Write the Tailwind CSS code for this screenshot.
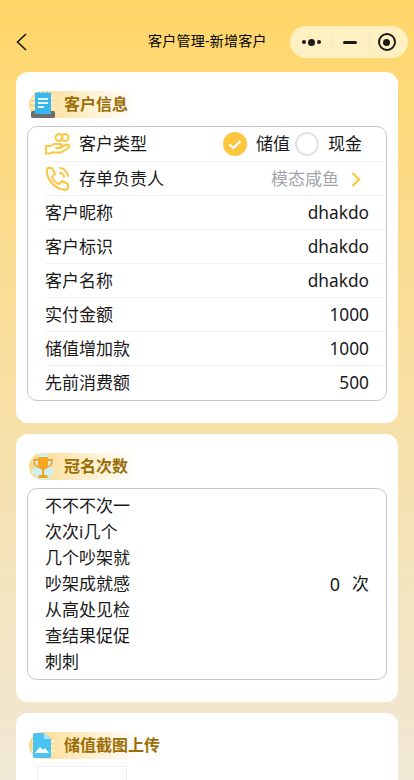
<!DOCTYPE html>
<html lang="zh">
<head>
<meta charset="utf-8">
<script src="https://cdn.jsdelivr.net/npm/@tailwindcss/browser@4"></script>
</head>
<body class="m-0">
<div class="w-[414px] h-[780px] overflow-hidden bg-gradient-to-b from-[#ffd667] to-[#f0e8d6] font-['Noto_Sans','Noto_Sans_CJK_SC',sans-serif] text-[#1a1a1a]">
  <header class="relative h-[72px] pt-[26px] pr-[6px] flex justify-end">
    <svg class="absolute left-[15px] top-[33px]" width="13" height="18" viewBox="0 0 13 18" fill="none" stroke="#111" stroke-width="1.5"><path d="M11 1 L2.5 9 L11 17"/></svg>
    <div class="absolute left-[148px] top-[32px] text-[14px] tracking-[0.25px] leading-[18px] text-black whitespace-nowrap">客户管理-新增客户</div>
    <div class="w-[118px] h-[32px] rounded-full bg-[#fff0c2] flex items-center">
      <div class="w-[41px] flex justify-center items-center gap-[2px] pl-[2px]">
        <span class="w-[4px] h-[4px] rounded-full bg-[#1a1a1a]"></span><span class="w-[7px] h-[7px] rounded-full bg-[#1a1a1a]"></span><span class="w-[4px] h-[4px] rounded-full bg-[#1a1a1a]"></span>
      </div>
      <div class="w-px h-[18px] bg-[#f5e6b8]"></div>
      <div class="w-[37px] flex justify-center pr-[2px]"><span class="w-[14px] h-[3px] rounded-sm bg-[#1a1a1a]"></span></div>
      <div class="w-px h-[18px] bg-[#f5e6b8]"></div>
      <div class="flex-1 flex justify-center pr-[5px]">
        <span class="w-[18px] h-[18px] rounded-full border-2 border-[#1a1a1a] flex items-center justify-center"><span class="w-[7px] h-[7px] rounded-full bg-[#1a1a1a]"></span></span>
      </div>
    </div>
  </header>

  <main class="mx-[16px] flex flex-col gap-[11px]">
    <section class="bg-white rounded-[12px] h-[351px] px-[11px] pt-[19px]">
      <div class="ml-[2px] w-[106px] h-[27px] rounded-l-full bg-gradient-to-r from-[#fbd98a] to-white flex items-center">
        <svg class="ml-[2px] shrink-0" width="24" height="27" viewBox="0 0 24 27">
          <g fill="#fdeec8"><rect x="0" y="6" width="24" height="2"/><rect x="0" y="11" width="24" height="2"/><rect x="0" y="16" width="24" height="2"/></g>
          <rect x="0" y="20" width="24" height="7" rx="1.5" fill="#6e6e6e"/>
          <path d="M4 1 L6 2 L8 1 L10 2 L12 1 L14 2 L16 1 L18 2 L20 1 V23 H4 Z" fill="#38b6ee"/>
          <g fill="#e3f6ff"><rect x="7" y="7" width="10" height="2"/><rect x="7" y="11" width="10" height="2"/><rect x="7" y="15" width="6" height="2"/></g>
        </svg>
        <span class="ml-[9px] pb-[2px] text-[16px] leading-[22px] font-bold text-[#9c6e07] whitespace-nowrap">客户信息</span>
      </div>
      <div class="mt-[8px] border border-[#c9c9c9] rounded-[10px] h-[275px] pl-[17px] text-[17px]">
        <div class="h-[35px] pr-[17px] flex items-center border-b border-[#f1f1f1]">
          <svg width="26" height="24" viewBox="0 0 26 24" fill="none" stroke="#fdc63f" stroke-width="2" stroke-linecap="round" stroke-linejoin="round"><circle cx="14" cy="5.5" r="3.5"/><circle cx="20" cy="5.5" r="3.5"/><path d="M1 14 h5 l3 -2 h6 a2 2 0 0 1 0 4 h-4"/><path d="M15 15 l7 -2.5 a2 2 0 0 1 2 3 l-8 5 h-9 l-2 1 h-4 v-7"/></svg>
          <span class="ml-[8px]">客户类型</span>
          <span class="ml-auto w-[24px] h-[24px] rounded-full bg-[#fdc63f] flex items-center justify-center"><svg width="14" height="11" viewBox="0 0 14 11" fill="none" stroke="#fff" stroke-width="2.2"><path d="M1.5 5.5 L5.5 9 L12.5 2"/></svg></span>
          <span class="ml-[9px]">储值</span>
          <span class="ml-[5px] w-[24px] h-[24px] rounded-full border-2 border-[#e2e2e2]"></span>
          <span class="ml-[9px] mr-[7px]">现金</span>
        </div>
        <div class="h-[34px] pt-[1px] pr-[17px] flex items-center border-b border-[#f1f1f1]">
          <svg width="26" height="26" viewBox="0 0 26 26" fill="none" stroke="#fdc63f" stroke-width="2" stroke-linecap="round" stroke-linejoin="round"><path d="M3 2 h4 l3 6 -3 3 c1 3 4 6 7 7 l3 -3 6 3 v3 c0 2 -1 3 -3 3 C10 23 2 14 2 5 c0 -2 0 -3 1 -3 z"/><path d="M15 7 a4 4 0 0 1 4 4"/><path d="M15 2 a9 9 0 0 1 8 8"/></svg>
          <span class="ml-[8px]">存单负责人</span>
          <span class="ml-auto text-[#a3a3ad]">模态咸鱼</span>
          <svg class="ml-[12px] mr-[8px]" width="10" height="15" viewBox="0 0 10 15" fill="none" stroke="#fdc63f" stroke-width="2.2"><path d="M1.5 1 L8 7.5 L1.5 14"/></svg>
        </div>
        <div class="h-[34px] pt-[1px] pr-[17px] flex items-center justify-between border-b border-[#f1f1f1]"><span>客户昵称</span><span class="text-[17.3px]">dhakdo</span></div>
        <div class="h-[34px] pt-[1px] pr-[17px] flex items-center justify-between border-b border-[#f1f1f1]"><span>客户标识</span><span class="text-[17.3px]">dhakdo</span></div>
        <div class="h-[34px] pt-[1px] pr-[17px] flex items-center justify-between border-b border-[#f1f1f1]"><span>客户名称</span><span class="text-[17.3px]">dhakdo</span></div>
        <div class="h-[34px] pt-[1px] pr-[17px] flex items-center justify-between border-b border-[#f1f1f1]"><span>实付金额</span><span class="text-[17.3px]">1000</span></div>
        <div class="h-[34px] pt-[1px] pr-[17px] flex items-center justify-between border-b border-[#f1f1f1]"><span>储值增加款</span><span class="text-[17.3px]">1000</span></div>
        <div class="h-[34px] pr-[17px] flex items-center justify-between"><span>先前消费额</span><span class="text-[17.3px]">500</span></div>
      </div>
    </section>

    <section class="bg-white rounded-[12px] h-[268px] px-[11px] pt-[19px]">
      <div class="ml-[2px] w-[106px] h-[27px] rounded-l-full bg-gradient-to-r from-[#fbd98a] to-white flex items-center">
        <svg class="ml-[2px] shrink-0" width="24" height="27" viewBox="0 0 24 27">
          <path d="M1 6 h6 v-5 h10 v5 h6 v4 h-3 v6 h3 v5 h-4 v5 h-14 v-5 h-4 v-5 h3 v-6 h-3 z" fill="#cdf1f7"/>
          <path d="M7 4 h10 v8 a5 5 0 0 1 -10 0 z" fill="#f5a623"/>
          <path d="M7 7 H3 c0 4 2 7 5 7 M17 7 h4 c0 4 -2 7 -5 7" fill="none" stroke="#f5a623" stroke-width="2"/>
          <rect x="11" y="16" width="2" height="6" fill="#f0a020"/><path d="M8 22 h8 l1 3 h-10 z" fill="#f0a020"/>
        </svg>
        <span class="ml-[9px] pb-[2px] text-[16px] leading-[22px] font-bold text-[#9c6e07] whitespace-nowrap">冠名次数</span>
      </div>
      <div class="mt-[8px] border border-[#c9c9c9] rounded-[10px] h-[192px] px-[17px] text-[17px] flex items-center justify-between">
        <div class="leading-[26px] w-[90px]">不不不次一<br>次次i几个<br>几个吵架就<br>吵架成就感<br>从高处见检<br>查结果促促<br>刺刺</div>
        <div class="flex gap-[12px]"><span class="text-[18px]">0</span><span>次</span></div>
      </div>
    </section>

    <section class="bg-white rounded-t-[12px] h-[80px] px-[11px] pt-[19px]">
      <div class="ml-[2px] w-[112px] h-[27px] rounded-l-full bg-gradient-to-r from-[#fbd98a] to-white flex items-center">
        <svg class="ml-[3px] shrink-0" width="23" height="27" viewBox="0 0 23 27">
          <g fill="#fdeec8"><rect x="0" y="8" width="23" height="2"/><rect x="0" y="13" width="23" height="2"/><rect x="0" y="18" width="23" height="2"/></g>
          <path d="M3 1 h9 l7 6 v17 a2 2 0 0 1 -2 2 h-14 a2 2 0 0 1 -2 -2 v-21 a2 2 0 0 1 2 -2z" fill="#4cc4f2"/>
          <path d="M12 1 l7 6 h-7 z" fill="#a8e3fa"/>
          <path d="M3 21 l5 -6 3 3 2 -2 4 5 z" fill="#fff"/>
        </svg>
        <span class="ml-[9px] pb-[2px] text-[16px] leading-[22px] font-bold text-[#9c6e07] whitespace-nowrap">储值截图上传</span>
      </div>
      <div class="ml-[10px] mt-[7px] w-[90px] h-[40px] border border-[#eeeeee]"></div>
    </section>
  </main>
</div>
</body>
</html>
